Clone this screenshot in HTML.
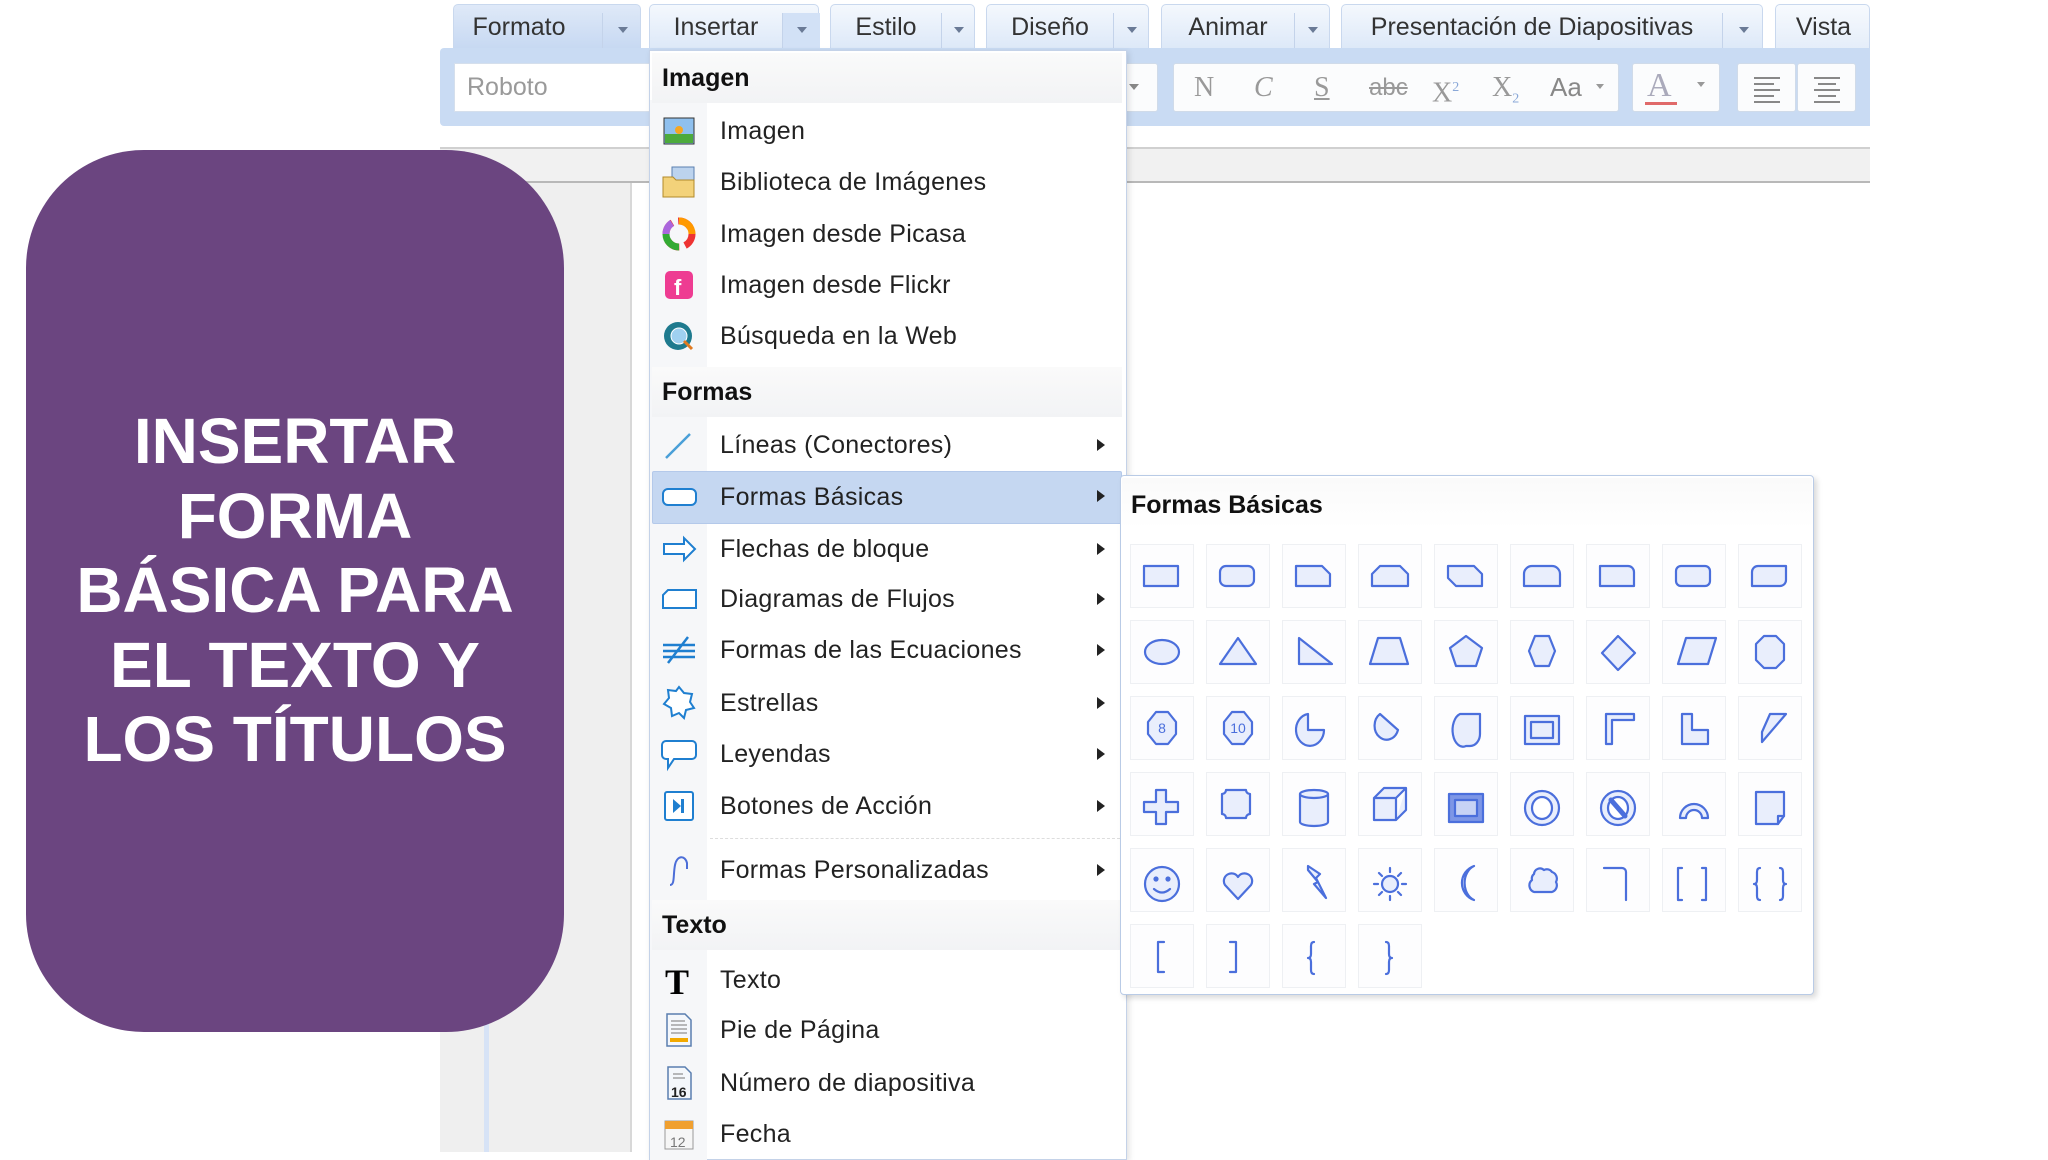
<!DOCTYPE html>
<html><head><meta charset="utf-8"><style>
*{margin:0;padding:0;box-sizing:border-box}
body{width:2048px;height:1152px;background:#fff;position:relative;overflow:hidden;font-family:"Liberation Sans","DejaVu Sans",sans-serif}
.abs{position:absolute}
.tab{position:absolute;top:4px;height:46px;border:1px solid #c9d8ee;border-bottom:none;border-radius:5px 5px 0 0;background:linear-gradient(#f4f8fd,#dce8f8);font-size:25px;color:#333;line-height:44px}
.tab span.t{position:absolute;left:0;text-align:center}
.tab .dd{position:absolute;top:8px;bottom:0;border-left:1px solid #c4d3ea}
.tab .dd:after{content:"";position:absolute;left:50%;top:14px;margin-left:-5px;border:5px solid transparent;border-top:6px solid #6a7a96}
.menu{position:absolute;left:649px;top:50px;width:478px;height:1110px;background:#fff;border:1px solid #c4d2e8;box-shadow:2px 2px 6px rgba(0,0,0,.12)}
.strip{position:absolute;left:650px;top:100px;width:57px;height:1060px;background:#f6f7f9}
.hdr{position:absolute;left:652px;width:470px;height:50px;background:linear-gradient(#fafafa,#f2f3f5);font-weight:bold;font-size:25px;color:#111;padding-left:10px;line-height:50px}
.it{position:absolute;left:720px;font-size:25px;color:#222;line-height:30px;letter-spacing:.3px}
.arr{position:absolute;left:1097px;width:0;height:0;border:6px solid transparent;border-left:8px solid #222}
.ic{position:absolute;left:660px;width:38px;height:38px}
.sub{position:absolute;left:1120px;top:475px;width:694px;height:520px;background:#fff;border:1px solid #b9cbe6;border-radius:4px;box-shadow:3px 3px 6px rgba(0,0,0,.15)}
.cell{position:absolute;width:64px;height:64px;border:1px solid #eef0f3;background:#fdfdfe}
.tb{position:absolute;top:63px;height:49px;background:#fbfcfd;border:1px solid #d0dbe9;border-radius:3px}
</style></head><body>

<div class="tab" style="left:453px;width:188px;background:linear-gradient(#dfe9f8,#c6d8f2)"><span class="t" style="width:130px">Formato</span><div class="dd" style="left:148px;width:40px"></div></div>
<div class="tab" style="left:649px;width:170px"><span class="t" style="width:132px">Insertar</span><div class="dd" style="left:132px;width:38px;background:#d2e1f6"></div></div>
<div class="tab" style="left:830px;width:145px"><span class="t" style="width:110px">Estilo</span><div class="dd" style="left:110px;width:35px"></div></div>
<div class="tab" style="left:986px;width:163px"><span class="t" style="width:126px">Diseño</span><div class="dd" style="left:126px;width:37px"></div></div>
<div class="tab" style="left:1161px;width:169px"><span class="t" style="width:132px">Animar</span><div class="dd" style="left:132px;width:37px"></div></div>
<div class="tab" style="left:1341px;width:422px"><span class="t" style="width:380px">Presentación de Diapositivas</span><div class="dd" style="left:380px;width:42px"></div></div>
<div class="tab" style="left:1775px;width:95px;background:linear-gradient(#f7fafe,#e4edf9)"><span class="t" style="width:95px">Vista</span></div>

<div class="abs" style="left:440px;top:48px;width:1430px;height:78px;background:#c9dbf3;border-radius:4px 0 0 4px"></div>
<div class="abs" style="left:454px;top:63px;width:200px;height:49px;background:#fff;border:1px solid #d5dfec;font-size:25px;color:#9a9a9a;line-height:47px;padding-left:12px">Roboto</div>
<div class="tb" style="left:1108px;width:50px"><div class="abs" style="left:20px;top:20px;border:5px solid transparent;border-top:6px solid #888"></div></div>
<div class="tb" style="left:1173px;width:446px;font-family:'Liberation Serif',serif;font-size:28px;color:#999;line-height:47px">
<span class="abs" style="left:20px">N</span><span class="abs" style="left:80px;font-style:italic">C</span><span class="abs" style="left:140px;text-decoration:underline">S</span><span class="abs" style="left:195px;font-family:'Liberation Sans';font-size:24px;text-decoration:line-through">abc</span><span class="abs" style="left:258px">X<sup style="font-size:14px;color:#8aa8d8">2</sup></span><span class="abs" style="left:318px">X<sub style="font-size:14px;color:#8aa8d8">2</sub></span><span class="abs" style="left:376px;font-family:'Liberation Sans';font-size:26px;color:#888">Aa</span><div class="abs" style="left:422px;top:20px;border:4px solid transparent;border-top:5px solid #999"></div></div>
<div class="tb" style="left:1632px;width:88px"><span class="abs" style="left:14px;top:-2px;font-family:'Liberation Serif';font-size:34px;color:#aab;line-height:47px">A</span><div class="abs" style="left:12px;top:38px;width:32px;height:3px;background:#e06a6a"></div><div class="abs" style="left:64px;top:18px;border:4px solid transparent;border-top:5px solid #999"></div></div>
<div class="tb" style="left:1737px;width:59px"><svg width="59" height="47"><g stroke="#888" stroke-width="2"><path d="M16 14h26M16 20h20M16 26h26M16 32h20M16 38h26"/></g></svg></div>
<div class="tb" style="left:1797px;width:59px"><svg width="59" height="47"><g stroke="#888" stroke-width="2"><path d="M16 14h26M20 20h18M16 26h26M20 32h18M16 38h26"/></g></svg></div>

<div class="abs" style="left:440px;top:147px;width:1430px;height:36px;background:#f1f1f1;border-top:2px solid #d0d0d0;border-bottom:2px solid #b8b8b8"></div>
<div class="abs" style="left:440px;top:183px;width:190px;height:969px;background:#efefef"></div>
<div class="abs" style="left:484px;top:183px;width:5px;height:969px;background:#d7e3f6"></div>
<div class="abs" style="left:630px;top:183px;width:1240px;height:969px;background:#fff;border-left:2px solid #d8d8d8"></div>

<div class="abs" style="left:26px;top:150px;width:538px;height:882px;background:#6b4580;border-radius:118px"></div>
<div class="abs" style="left:26px;top:404px;width:538px;text-align:center;color:#fff;font-weight:bold;font-size:64px;line-height:74.5px">INSERTAR<br>FORMA<br>BÁSICA PARA<br>EL TEXTO Y<br>LOS TÍTULOS</div>

<div class="menu"></div>
<div class="strip"></div>
<div class="hdr" style="top:53px">Imagen</div>
<div class="hdr" style="top:367px">Formas</div>
<div class="hdr" style="top:900px">Texto</div>
<div class="abs" style="left:652px;top:471px;width:470px;height:53px;background:#c5d7f1;border:1px solid #b4c9ea;border-radius:2px"></div>
<div class="abs" style="left:710px;top:838px;width:410px;border-top:1px dashed #ddd"></div>

<div class="it" style="top:116px">Imagen</div>
<div class="it" style="top:167px">Biblioteca de Imágenes</div>
<div class="it" style="top:219px">Imagen desde Picasa</div>
<div class="it" style="top:270px">Imagen desde Flickr</div>
<div class="it" style="top:321px">Búsqueda en la Web</div>
<div class="it" style="top:430px">Líneas (Conectores)</div>
<div class="it" style="top:482px">Formas Básicas</div>
<div class="it" style="top:534px">Flechas de bloque</div>
<div class="it" style="top:584px">Diagramas de Flujos</div>
<div class="it" style="top:635px">Formas de las Ecuaciones</div>
<div class="it" style="top:688px">Estrellas</div>
<div class="it" style="top:739px">Leyendas</div>
<div class="it" style="top:791px">Botones de Acción</div>
<div class="it" style="top:855px">Formas Personalizadas</div>
<div class="it" style="top:965px">Texto</div>
<div class="it" style="top:1015px">Pie de Página</div>
<div class="it" style="top:1068px">Número de diapositiva</div>
<div class="it" style="top:1119px">Fecha</div>
<div class="arr" style="top:439px"></div><div class="arr" style="top:490px"></div><div class="arr" style="top:543px"></div><div class="arr" style="top:593px"></div><div class="arr" style="top:644px"></div><div class="arr" style="top:697px"></div><div class="arr" style="top:748px"></div><div class="arr" style="top:800px"></div><div class="arr" style="top:864px"></div>

<svg class="ic" style="top:112px" viewBox="0 0 38 38"><rect x="4" y="6" width="30" height="26" fill="#8fc0ee" stroke="#333"/><rect x="5" y="22" width="28" height="9" fill="#4caa3c"/><circle cx="19" cy="18" r="4" fill="#f5a623"/></svg>
<svg class="ic" style="top:163px" viewBox="0 0 38 38"><rect x="12" y="4" width="22" height="16" fill="#bcd3ee" stroke="#5a7fb0"/><path d="M3 14h10l3 3h18v17H3z" fill="#f3d27a" stroke="#b28a2a"/></svg>
<svg class="ic" style="top:215px" viewBox="0 0 38 38"><circle cx="19" cy="19" r="13" fill="none" stroke="#e33" stroke-width="7" stroke-dasharray="14 6"/><path d="M19 6a13 13 0 0 1 13 13" stroke="#f90" stroke-width="7" fill="none"/><path d="M6 19a13 13 0 0 0 13 13" stroke="#3a3" stroke-width="7" fill="none"/><path d="M6 19a13 13 0 0 1 6-11" stroke="#a6d" stroke-width="7" fill="none"/></svg>
<svg class="ic" style="top:266px" viewBox="0 0 38 38"><rect x="5" y="5" width="28" height="28" rx="5" fill="#ee3c92"/><text x="14" y="29" fill="#fff" font-size="22" font-weight="bold" font-family="Liberation Sans">f</text></svg>
<svg class="ic" style="top:317px" viewBox="0 0 38 38"><circle cx="18" cy="19" r="14" fill="#1e7a8e"/><circle cx="19" cy="19" r="8" fill="#9fd0f0" stroke="#fff"/><path d="M24 24l8 8" stroke="#e07a20" stroke-width="3"/></svg>
<svg class="ic" style="top:426px" viewBox="0 0 38 38"><path d="M6 32L30 8" stroke="#4aa0d8" stroke-width="2.5"/></svg>
<svg class="ic" style="top:478px" viewBox="0 0 38 38"><rect x="3" y="11" width="33" height="16" rx="5" fill="#fff" stroke="#1f7fd0" stroke-width="2"/></svg>
<svg class="ic" style="top:530px" viewBox="0 0 38 38"><path d="M4 14h20V8l11 11-11 11v-6H4z" fill="#fff" stroke="#1f7fd0" stroke-width="2"/></svg>
<svg class="ic" style="top:580px" viewBox="0 0 38 38"><path d="M8 10h28v18H3V15z" fill="#fff" stroke="#1f7fd0" stroke-width="2"/></svg>
<svg class="ic" style="top:631px" viewBox="0 0 38 38"><path d="M3 14h32M3 20h32M3 26h32M8 32L28 6" stroke="#1f7fd0" stroke-width="2.5" fill="none"/></svg>
<svg class="ic" style="top:684px" viewBox="0 0 38 38"><path d="M19 3l5 6 8 1-2 8 4 6-8 2-2 8-5-5-7 3-1-8-7-4 5-6-1-8 8 1z" fill="#fff" stroke="#1f7fd0" stroke-width="2"/></svg>
<svg class="ic" style="top:735px" viewBox="0 0 38 38"><path d="M6 6h26a4 4 0 0 1 4 4v10a4 4 0 0 1-4 4H14l-6 9v-9H6a4 4 0 0 1-4-4V10a4 4 0 0 1 4-4z" fill="#fff" stroke="#1f7fd0" stroke-width="2"/></svg>
<svg class="ic" style="top:787px" viewBox="0 0 38 38"><rect x="5" y="5" width="28" height="28" rx="2" fill="#fff" stroke="#1f7fd0" stroke-width="2"/><path d="M13 12l8 7-8 7zM21 12h3v14h-3z" fill="#1f7fd0"/></svg>
<svg class="ic" style="top:851px" viewBox="0 0 38 38"><path d="M10 34c5 0 3-10 5-20s10-10 12-2v6" fill="none" stroke="#4c6ed8" stroke-width="2"/></svg>
<svg class="ic" style="top:961px" viewBox="0 0 38 38"><text x="5" y="33" font-family="Liberation Serif" font-weight="bold" font-size="36" fill="#000">T</text></svg>
<svg class="ic" style="top:1011px" viewBox="0 0 38 38"><path d="M7 3h18l6 6v26H7z" fill="#f4f7fb" stroke="#5a7fb0" stroke-width="1.5"/><path d="M11 10h14M11 14h16M11 18h16M11 22h16" stroke="#777"/><path d="M10 27h18v4H10z" fill="#f2a900"/></svg>
<svg class="ic" style="top:1064px" viewBox="0 0 38 38"><path d="M8 3h17l6 6v26H8z" fill="#f4f7fb" stroke="#5a7fb0" stroke-width="1.5"/><path d="M13 10h10M13 14h12" stroke="#777"/><text x="11" y="33" font-size="14" font-weight="bold" font-family="Liberation Sans" fill="#222">16</text></svg>
<svg class="ic" style="top:1115px" viewBox="0 0 38 38"><rect x="5" y="6" width="28" height="28" fill="#f6f6f6" stroke="#999"/><rect x="5" y="6" width="28" height="8" fill="#f0a030"/><text x="10" y="32" font-size="14" font-family="Liberation Sans" fill="#777">12</text></svg>

<div class="sub"></div>
<div class="abs" style="left:1122px;top:478px;width:690px;height:50px;background:linear-gradient(#fafafa,#fff)"></div>
<div class="abs" style="left:1131px;top:491px;font-size:25px;font-weight:bold;color:#111">Formas Básicas</div>

<div class="cell" style="left:1130px;top:544px"></div><div class="cell" style="left:1206px;top:544px"></div><div class="cell" style="left:1282px;top:544px"></div><div class="cell" style="left:1358px;top:544px"></div><div class="cell" style="left:1434px;top:544px"></div><div class="cell" style="left:1510px;top:544px"></div><div class="cell" style="left:1586px;top:544px"></div><div class="cell" style="left:1662px;top:544px"></div><div class="cell" style="left:1738px;top:544px"></div>
<div class="cell" style="left:1130px;top:620px"></div><div class="cell" style="left:1206px;top:620px"></div><div class="cell" style="left:1282px;top:620px"></div><div class="cell" style="left:1358px;top:620px"></div><div class="cell" style="left:1434px;top:620px"></div><div class="cell" style="left:1510px;top:620px"></div><div class="cell" style="left:1586px;top:620px"></div><div class="cell" style="left:1662px;top:620px"></div><div class="cell" style="left:1738px;top:620px"></div>
<div class="cell" style="left:1130px;top:696px"></div><div class="cell" style="left:1206px;top:696px"></div><div class="cell" style="left:1282px;top:696px"></div><div class="cell" style="left:1358px;top:696px"></div><div class="cell" style="left:1434px;top:696px"></div><div class="cell" style="left:1510px;top:696px"></div><div class="cell" style="left:1586px;top:696px"></div><div class="cell" style="left:1662px;top:696px"></div><div class="cell" style="left:1738px;top:696px"></div>
<div class="cell" style="left:1130px;top:772px"></div><div class="cell" style="left:1206px;top:772px"></div><div class="cell" style="left:1282px;top:772px"></div><div class="cell" style="left:1358px;top:772px"></div><div class="cell" style="left:1434px;top:772px"></div><div class="cell" style="left:1510px;top:772px"></div><div class="cell" style="left:1586px;top:772px"></div><div class="cell" style="left:1662px;top:772px"></div><div class="cell" style="left:1738px;top:772px"></div>
<div class="cell" style="left:1130px;top:848px"></div><div class="cell" style="left:1206px;top:848px"></div><div class="cell" style="left:1282px;top:848px"></div><div class="cell" style="left:1358px;top:848px"></div><div class="cell" style="left:1434px;top:848px"></div><div class="cell" style="left:1510px;top:848px"></div><div class="cell" style="left:1586px;top:848px"></div><div class="cell" style="left:1662px;top:848px"></div><div class="cell" style="left:1738px;top:848px"></div>
<div class="cell" style="left:1130px;top:924px"></div><div class="cell" style="left:1206px;top:924px"></div><div class="cell" style="left:1282px;top:924px"></div><div class="cell" style="left:1358px;top:924px"></div>

<svg class="abs" style="left:1130px;top:544px" width="684" height="456" viewBox="0 0 684 456">
<g fill="#e9eefc" stroke="#4b6fdc" stroke-width="2.2" stroke-linejoin="round" stroke-linecap="round">
<rect x="14" y="22" width="34" height="20"/>
<rect x="90" y="22" width="34" height="20" rx="6"/>
<path d="M166 22h26l8 8v12h-34z"/>
<path d="M250 22h20l8 8v12h-36v-12z"/>
<path d="M318 22h26l8 8v12h-26l-8-8z"/>
<path d="M402 22h20a8 8 0 0 1 8 8v12h-36v-12a8 8 0 0 1 8-8z"/>
<path d="M470 22h28a6 6 0 0 1 6 6v14h-34z"/>
<rect x="546" y="22" width="34" height="20" rx="5"/>
<path d="M628 22h28v14a6 6 0 0 1-6 6h-28v-14a6 6 0 0 1 6-6z"/>
<ellipse cx="32" cy="108" rx="17" ry="12"/>
<path d="M108 94l18 26h-36z"/>
<path d="M169 94v26h33z"/>
<path d="M248 94h22l8 26h-38z"/>
<path d="M336 92l16 12-6 18h-20l-6-18z"/>
<path d="M405 92h14l6 15-6 15h-14l-6-15z"/>
<path d="M488 92l17 17-17 17-16-17z"/>
<path d="M556 94h30l-8 26h-30z"/>
<path d="M634 92h12l8 8v16l-8 8h-12l-8-8v-16z"/>
<path d="M26 168h12l8 10v12l-8 10h-12l-8-10v-12z"/>
<path d="M102 168h12l8 10v12l-8 10h-12l-8-10v-12z"/>
<path d="M178 170a14 16 0 1 0 16 16h-16z"/>
<path d="M250 170a12 14 0 1 0 18 16z"/>
<path d="M330 170h20v20a10 12 0 0 1-10 12h-4a10 16 0 0 1-6-32z"/>
<rect x="395" y="172" width="34" height="28"/><rect x="401" y="178" width="22" height="16"/>
<path d="M476 170h28v6h-22v24h-6z"/>
<path d="M552 170h10v16h16v14h-26z"/>
<path d="M640 170h16l-24 28v-10z"/>
<path d="M26 246h10v12h12v10h-12v12h-10v-12h-12v-10h12z"/>
<path d="M96 246h20a4 4 0 0 0 4 4v20a4 4 0 0 0-4 4h-20a4 4 0 0 0-4-4v-20a4 4 0 0 0 4-4z"/>
<path d="M170 250a14 4 0 0 1 28 0v28a14 4 0 0 1-28 0z"/><path d="M170 250a14 4 0 0 0 28 0" fill="none"/>
<path d="M244 254h22v22h-22zM244 254l10-10h22l-10 10M266 276l10-10v-22"/>
<rect x="319" y="250" width="34" height="28" fill="#7d96e6"/><rect x="325" y="256" width="22" height="16" fill="#c7d3f5"/>
<ellipse cx="412" cy="264" rx="17" ry="17"/><ellipse cx="412" cy="264" rx="10" ry="11" fill="#fff"/>
<ellipse cx="488" cy="264" rx="17" ry="17"/><ellipse cx="488" cy="264" rx="10" ry="11" fill="#fff"/><path d="M481 256l14 16" stroke-width="5"/>
<path d="M550 274a14 14 0 0 1 28 0h-6a8 8 0 0 0-16 0z"/>
<path d="M626 248h28v24l-6 8h-22z"/><path d="M648 280v-8h6" fill="none"/>
<circle cx="32" cy="340" r="17"/><circle cx="26" cy="335" r="1.5" fill="#4b6fdc"/><circle cx="38" cy="335" r="1.5" fill="#4b6fdc"/><path d="M24 345q8 7 16 0" fill="none"/>
<path d="M108 355l-13-14a7 7 0 0 1 13-8 7 7 0 0 1 13 8z"/>
<path d="M178 322l12 8-4 4 10 20-12-14 4-2-10-12z"/>
<circle cx="260" cy="340" r="8"/><g fill="none"><path d="M260 324v4M260 352v4M244 340h4M272 340h4M249 329l3 3M268 348l3 3M249 351l3-3M268 332l3-3"/></g>
<path d="M344 322a18 18 0 0 0 0 34 14 18 0 0 1 0-34z"/>
<path d="M404 330a6 6 0 0 1 10-4 6 6 0 0 1 8 2 7 7 0 0 1 4 10 7 7 0 0 1-4 10h-18a7 7 0 0 1-2-12 6 6 0 0 1 2-6z"/>
<path d="M474 324h18a4 4 0 0 1 4 4v28" fill="none"/>
<path d="M552 324h-4v32h4M572 324h4v32h-4" fill="none"/>
<path d="M630 324q-3 0-3 4v8q0 4-3 4 3 0 3 4v8q0 4 3 4M650 324q3 0 3 4v8q0 4 3 4-3 0-3 4v8q0 4-3 4" fill="none"/>
<path d="M34 398h-6v30h6" fill="none"/>
<path d="M100 398h6v30h-6" fill="none"/>
<path d="M184 398q-3 0-3 4v8q0 4-3 4 3 0 3 4v8q0 4 3 4" fill="none"/>
<path d="M256 398q3 0 3 4v8q0 4 3 4-3 0-3 4v8q0 4-3 4" fill="none"/>
</g>
<g font-family="Liberation Sans" font-size="14" fill="#4b6fdc" text-anchor="middle"><text x="32" y="189">8</text><text x="108" y="189">10</text></g>
</svg>
</body></html>
